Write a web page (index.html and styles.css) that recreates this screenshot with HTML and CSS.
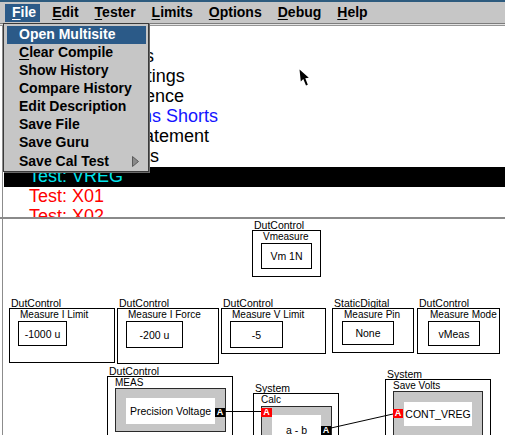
FILE: index.html
```html
<!DOCTYPE html>
<html>
<head>
<meta charset="utf-8">
<title>Tester</title>
<link rel="stylesheet" href="styles.css">
</head>
<body>
<div class="screen">
  <div class="titlestrip"></div>
  <nav class="menubar">
    <span class="mi open"><u>F</u>ile</span>
    <span class="mi"><u>E</u>dit</span>
    <span class="mi"><u>T</u>ester</span>
    <span class="mi"><u>L</u>imits</span>
    <span class="mi"><u>O</u>ptions</span>
    <span class="mi"><u>D</u>ebug</span>
    <span class="mi"><u>H</u>elp</span>
  </nav>
  <div class="menurule"></div>

  <div class="listpane">
    <ul class="tree">
      <li class="blue">Pin Definitions</li>
      <li>Power Supplies</li>
      <li>Board Test Settings</li>
      <li>Program Sequence</li>
      <li class="blue">Function: Opens Shorts</li>
      <li>Print Result Statement</li>
      <li>Datalog Reports</li>
      <li class="sel">Test: VREG</li>
      <li class="red">Test: X01</li>
      <li class="red">Test: X02</li>
    </ul>
  </div>

  <div class="splitter"></div>

  <div class="canvas">
    <div class="node n-vm">
      <div class="lbl">DutControl</div>
      <div class="box">
        <div class="ttl">Vmeasure</div>
        <div class="val">Vm 1N</div>
      </div>
    </div>
    <div class="node n-il">
      <div class="lbl">DutControl</div>
      <div class="box">
        <div class="ttl">Measure I Limit</div>
        <div class="val">-1000 u</div>
      </div>
    </div>
    <div class="node n-if">
      <div class="lbl">DutControl</div>
      <div class="box">
        <div class="ttl">Measure I Force</div>
        <div class="val">-200 u</div>
      </div>
    </div>
    <div class="node n-vl">
      <div class="lbl">DutControl</div>
      <div class="box">
        <div class="ttl">Measure V Limit</div>
        <div class="val">-5</div>
      </div>
    </div>
    <div class="node n-pin">
      <div class="lbl">StaticDigital</div>
      <div class="box">
        <div class="ttl">Measure Pin</div>
        <div class="val">None</div>
      </div>
    </div>
    <div class="node n-mode">
      <div class="lbl">DutControl</div>
      <div class="box">
        <div class="ttl">Measure Mode</div>
        <div class="val">vMeas</div>
      </div>
    </div>

    <div class="node n-meas">
      <div class="lbl">DutControl</div>
      <div class="box fbox">
        <div class="ttl">MEAS</div>
        <div class="frame">
          <div class="white">Precision Voltage</div>
          <span class="port out">A</span>
        </div>
      </div>
    </div>
    <div class="node n-calc">
      <div class="lbl">System</div>
      <div class="box fbox">
        <div class="ttl">Calc</div>
        <div class="frame">
          <span class="port in">A</span>
          <div class="white">a - b</div>
          <span class="port out">A</span>
        </div>
      </div>
    </div>
    <div class="node n-save">
      <div class="lbl">System</div>
      <div class="box fbox">
        <div class="ttl">Save Volts</div>
        <div class="frame">
          <span class="port in">A</span>
          <div class="white">CONT_VREG</div>
        </div>
      </div>
    </div>

    <svg class="wires" width="502" height="216" viewBox="0 0 502 216">
      <line x1="222" y1="192.5" x2="258" y2="192.5" stroke="#000" stroke-width="1"/>
      <line x1="328" y1="209" x2="390" y2="195" stroke="#000" stroke-width="1"/>
    </svg>
  </div>

  <div class="dropdown">
    <div class="di sel">Open Multisite</div>
    <div class="di"><u>C</u>lear Compile</div>
    <div class="di">Show History</div>
    <div class="di">Compare History</div>
    <div class="di">Edit Description</div>
    <div class="di">Save File</div>
    <div class="di">Save Guru</div>
    <div class="di sub">Save Cal Test
      <svg class="arrow" width="7" height="11" viewBox="0 0 7 11"><polygon points="0.5,0.5 6.5,5.5 0.5,10.5" fill="#8a8a8a" stroke="#5a5a5a" stroke-width="1"/></svg>
    </div>
  </div>

  <svg class="cursor" width="11" height="18" viewBox="0 0 11 18">
    <path d="M0.5 0.5 L1.8 12.5 L4.3 10 L7 16.5 L8.8 15.8 L6.3 9.3 L9.8 8.8 Z" fill="#000"/>
  </svg>
</div>
</body>
</html>
```

FILE: styles.css
```css
* { box-sizing: border-box; }
html, body { margin: 0; padding: 0; }
body {
  width: 505px;
  height: 435px;
  overflow: hidden;
  background: #fff;
  font-family: "Liberation Sans", Arial, sans-serif;
  color: #000;
}
.screen {
  position: relative;
  width: 505px;
  height: 435px;
  display: flex;
  flex-direction: column;
  overflow: hidden;
}
.titlestrip { flex: none; height: 2px; background: #2d5b7e; }
.menubar {
  flex: none;
  height: 21px;
  background: #c6c6c6;
  display: flex;
  gap: 5px;
  padding: 2px 0 0 5px;
}
.mi {
  height: 18px;
  line-height: 17px;
  padding: 0 4px 0 7px;
  font-size: 14px;
  font-weight: bold;
  white-space: nowrap;
}
.mi.open { background: #2b5a88; color: #fff; }
u { text-underline-offset: 2px; }
.menurule {
  flex: none;
  height: 3px;
  background: #e2e2e2;
  border-top: 1px solid #7c7c7c;
  border-bottom: 1px solid #959595;
}

.listpane {
  flex: none;
  height: 191px;
  margin-left: 2px;
  border-left: 1px solid #8c8c8c;
  padding: 1px 0 0 1px;
  overflow: hidden;
}
.tree { list-style: none; margin: 0; padding: 0; }
.tree li {
  height: 20px;
  line-height: 18px;
  padding-left: 25px;
  font-size: 18px;
  white-space: nowrap;
}
.tree .blue { color: #1414ff; }
.tree .red { color: #ff0000; }
.tree .sel { background: #000; color: #00e4ec; }

.splitter { flex: none; height: 2px; background: #8a8a8a; }

.canvas {
  flex: 1;
  position: relative;
  margin-left: 2px;
  border-left: 1px solid #8c8c8c;
  font-size: 10.5px;
}
.node { position: absolute; }
.lbl {
  height: 9px;
  line-height: 9px;
  padding-left: 2px;
  white-space: nowrap;
}
.box {
  border: 1px solid #000;
  padding-left: 8px;
}
.ttl {
  height: 12px;
  line-height: 12px;
  padding-left: 2px;
  font-size: 10px;
  white-space: nowrap;
}
.val {
  border: 1px solid #000;
  display: flex;
  align-items: center;
  justify-content: center;
  white-space: nowrap;
}

.n-vm { left: 249px; top: 2px; }
.n-vm .box { width: 69px; height: 47px; }
.n-vm .val { width: 51px; height: 26px; }
.n-il { left: 6px; top: 80px; }
.n-il .box { width: 106px; height: 55px; }
.n-il .val { width: 49px; height: 25px; }
.n-if { left: 114px; top: 80px; }
.n-if .box { width: 102px; height: 56px; }
.n-if .val { width: 57px; height: 27px; }
.n-vl { left: 218px; top: 80px; }
.n-vl .box { width: 105px; height: 46px; }
.n-vl .val { width: 53px; height: 27px; }
.n-pin { left: 329px; top: 80px; }
.n-pin .box { width: 82px; height: 45px; padding-left: 9px; }
.n-pin .val { width: 52px; height: 24px; }
.n-mode { left: 414px; top: 80px; }
.n-mode .box { width: 83px; height: 46px; padding-left: 10px; }
.n-mode .val { width: 52px; height: 25px; }

.fbox { padding-left: 7px; }
.fbox .ttl { padding-left: 0; }
.frame {
  position: relative;
  border: 1px solid #2a2a2a;
  background: #c6c6c6;
}
.white {
  background: #fff;
  display: flex;
  align-items: center;
  justify-content: center;
  white-space: nowrap;
}
.port {
  position: absolute;
  width: 10px;
  height: 9px;
  line-height: 9px;
  font-size: 9px;
  font-weight: bold;
  text-align: center;
  color: #fff;
  background: #000;
}
.port.in { background: #ff0000; }

.n-meas { left: 104px; top: 148px; }
.n-meas .box { width: 126px; height: 80px; }
.n-meas .ttl { height: 11px; line-height: 11px; }
.n-meas .frame { width: 111px; height: 44px; padding: 9px 0 0 10px; }
.n-meas .white { width: 89px; height: 26px; }
.n-meas .port.out { left: 99px; top: 19px; }

.n-calc { left: 250px; top: 165px; }
.n-calc .box { width: 86px; height: 70px; }
.n-calc .frame { width: 71px; height: 60px; padding: 8px 10px 0 10px; }
.n-calc .white { width: 49px; height: 29px; }
.n-calc .port.in { left: -1px; top: 1px; width: 11px; }
.n-calc .port.out { left: 59px; top: 19px; }

.n-save { left: 382px; top: 151px; }
.n-save .box { width: 106px; height: 80px; }
.n-save .ttl { height: 11px; line-height: 11px; }
.n-save .frame { width: 90px; height: 60px; padding: 10px 0 0 10px; }
.n-save .white { width: 68px; height: 24px; }
.n-save .port.in { left: -1px; top: 17px; }

.wires { position: absolute; left: 0; top: 0; pointer-events: none; }

.dropdown {
  position: absolute;
  left: 3px;
  top: 23px;
  width: 146px;
  height: 149px;
  background: #c6c6c6;
  border: 1px solid #3a3a3a;
  box-shadow: 1px 1px 0 #6a6a6a;
  padding: 2px 2px 1px 3px;
}
.di {
  height: 18px;
  line-height: 17px;
  padding-left: 12px;
  font-size: 14px;
  font-weight: bold;
  white-space: nowrap;
}
.di.sel { background: #2b5a88; color: #fff; }
.di.sub {
  display: flex;
  justify-content: space-between;
  align-items: center;
  padding-right: 7px;
}
.arrow { display: block; }

.cursor { position: absolute; left: 299px; top: 69px; }
```
